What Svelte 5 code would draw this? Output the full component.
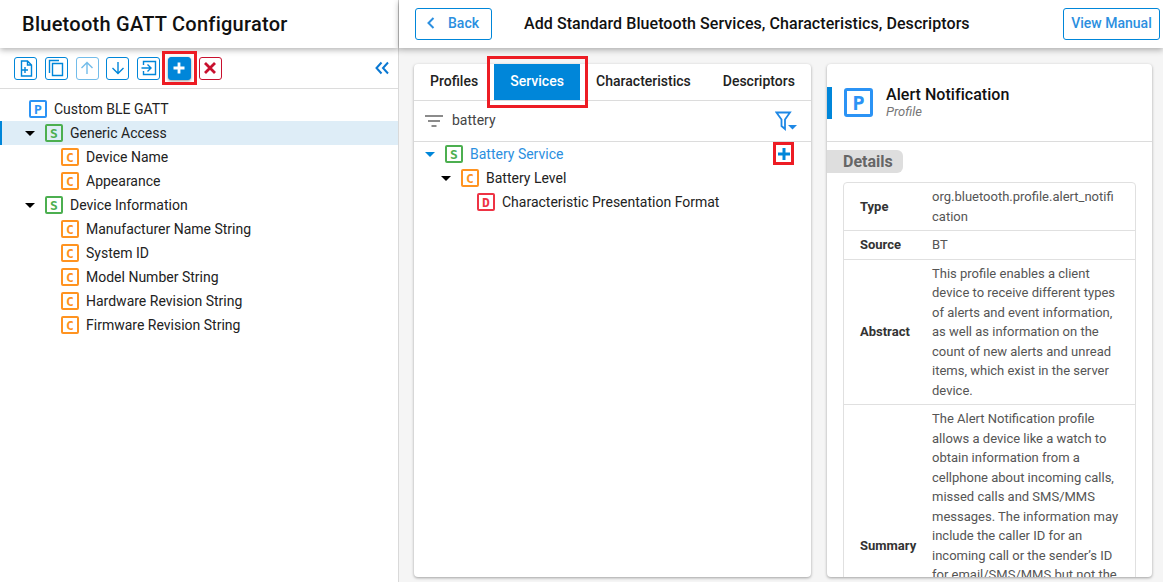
<script>
  const gattTree = [
    { type: 'P', label: 'Custom BLE GATT', depth: 0 },
    { type: 'S', label: 'Generic Access', depth: 0, open: true, selected: true },
    { type: 'C', label: 'Device Name', depth: 1 },
    { type: 'C', label: 'Appearance', depth: 1 },
    { type: 'S', label: 'Device Information', depth: 0, open: true },
    { type: 'C', label: 'Manufacturer Name String', depth: 1 },
    { type: 'C', label: 'System ID', depth: 1 },
    { type: 'C', label: 'Model Number String', depth: 1 },
    { type: 'C', label: 'Hardware Revision String', depth: 1 },
    { type: 'C', label: 'Firmware Revision String', depth: 1 }
  ];

  const tabs = ['Profiles', 'Services', 'Characteristics', 'Descriptors'];

  const details = [
    { key: 'Type', value: 'org.bluetooth.profile.alert_notification' },
    { key: 'Source', value: 'BT' },
    { key: 'Abstract', value: 'This profile enables a client device to receive different types of alerts and event information, as well as information on the count of new alerts and unread items, which exist in the server device.' },
    { key: 'Summary', value: 'The Alert Notification profile allows a device like a watch to obtain information from a cellphone about incoming calls, missed calls and SMS/MMS messages. The information may include the caller ID for an incoming call or the sender\u2019s ID for email/SMS/MMS but not the message content. This profile also enables the client device to get information on how many new alerts and unread items exist in the server device.' }
  ];
</script>

{#snippet badge(type)}
  <span class="badge badge-{type}">{type}</span>
{/snippet}

<div class="app">
  <aside class="sidebar">
    <header class="side-head"><h1>Bluetooth GATT Configurator</h1></header>

    <div class="toolbar">
      <button class="tool" aria-label="New">
        <svg viewBox="0 0 18 18"><path d="M4.500 2h6l4 4v11h-10zM10.500 2v4h4M8 8v6M5 11h6"/></svg>
      </button>
      <button class="tool" aria-label="Copy">
        <svg viewBox="0 0 18 18"><path d="M5.500 4.500h10v12h-10zM2.500 14V1.500H12"/></svg>
      </button>
      <button class="tool disabled" aria-label="Move up">
        <svg viewBox="0 0 18 18"><path d="M9 15V3.500M3.500 9L9 3.500 14.500 9"/></svg>
      </button>
      <button class="tool" aria-label="Move down">
        <svg viewBox="0 0 18 18"><path d="M9 3v11.500M3.500 9L9 14.500 14.500 9"/></svg>
      </button>
      <button class="tool" aria-label="Import">
        <svg viewBox="0 0 18 18"><path d="M3.500 6V2.500h12v13h-12V12M1.500 9h9M7.500 5.500L11 9l-3.500 3.500"/></svg>
      </button>
      <button class="tool add" aria-label="Add">
        <svg viewBox="0 0 16 16"><path d="M8 2.500v11M2.500 8h11"/></svg>
      </button>
      <button class="tool remove" aria-label="Delete">
        <svg viewBox="0 0 16 16"><path d="M3 3l10 10M13 3L3 13"/></svg>
      </button>
      <button class="collapse" aria-label="Collapse">
        <svg viewBox="0 0 14 14"><path d="M6.500 1.500L1.500 7l5 5.500M13 1.500L8 7l5 5.500"/></svg>
      </button>
    </div>

    <ul class="tree side-tree">
      {#each gattTree as node}
        <li class="row" class:selected={node.selected} style="padding-left: {29 + node.depth * 32}px">
          {#if node.open}<span class="caret"></span>{/if}
          {@render badge(node.type)}
          <span class="label">{node.label}</span>
        </li>
      {/each}
    </ul>
  </aside>

  <div class="main">
    <header class="main-head">
      <button class="outline back">
        <svg viewBox="0 0 10 14"><path d="M7.500 2L2.500 7l5 5"/></svg>
        Back
      </button>
      <h2>Add Standard Bluetooth Services, Characteristics, Descriptors</h2>
      <button class="outline manual">View Manual</button>
    </header>

    <div class="content">
      <section class="card picker">
        <nav class="tabs">
          {#each tabs as tab}
            <button class="tab" class:active={tab === 'Services'}>{tab}</button>
          {/each}
        </nav>

        <div class="filter">
          <svg class="sort" viewBox="0 0 18 12"><path d="M0 1h18M3 6h12M6.500 11h5"/></svg>
          <span class="query">battery</span>
          <svg class="funnel" viewBox="0 0 22 20">
            <path d="M1.500 1.500h13.500l-5 7v9.500l-3.500-3v-6.500z"/>
            <path class="fill" d="M13 14h9l-4.500 4.500z"/>
          </svg>
        </div>

        <ul class="tree result-tree">
          <li class="row hit">
            <span class="caret blue"></span>
            {@render badge('S')}
            <span class="label">Battery Service</span>
            <svg class="plus" viewBox="0 0 14 14"><path d="M7 1v12M1 7h12"/></svg>
          </li>
          <li class="row sub">
            <span class="caret"></span>
            {@render badge('C')}
            <span class="label">Battery Level</span>
          </li>
          <li class="row leaf">
            {@render badge('D')}
            <span class="label">Characteristic Presentation Format</span>
          </li>
        </ul>

        <span class="mark mark-tab"></span>
        <span class="mark mark-plus"></span>
      </section>

      <section class="card info">
        <div class="info-head">
          <span class="big-badge">P</span>
          <div>
            <div class="info-title">Alert Notification</div>
            <div class="info-sub">Profile</div>
          </div>
        </div>
        <div class="chip">Details</div>
        <table>
          <tbody>
            {#each details as d}
              <tr>
                <th>{d.key}</th>
                <td>{d.value}</td>
              </tr>
            {/each}
          </tbody>
        </table>
      </section>
    </div>
  </div>

  <span class="mark mark-add"></span>
</div>

<style>
  :global(body) {
    margin: 0;
    font-family: Roboto, "Liberation Sans", sans-serif;
    color: #1a1a1a;
  }
  button {
    font-family: inherit;
    background: none;
    padding: 0;
    cursor: pointer;
  }
  ul {
    list-style: none;
    margin: 0;
    padding: 0;
  }
  .app {
    position: relative;
    display: flex;
    width: 1163px;
    height: 582px;
    overflow: hidden;
    background: #fff;
  }

  /* sidebar */
  .sidebar {
    width: 398px;
    flex-shrink: 0;
    border-right: 1px solid #d9d9d9;
    background: #fff;
  }
  .side-head {
    position: relative;
    height: 48px;
    display: flex;
    align-items: center;
    padding-left: 22px;
    box-shadow: 0 2px 6px rgba(0, 0, 0, 0.3);
  }
  h1 {
    margin: 0;
    font-size: 20px;
    font-weight: 500;
    letter-spacing: 0.26px;
    color: #111;
  }
  .toolbar {
    display: flex;
    align-items: center;
    gap: 7.800px;
    height: 40px;
    padding-left: 14px;
    padding-right: 9px;
    border-bottom: 1px solid #dcdcdc;
  }
  .tool {
    width: 23px;
    height: 23px;
    box-sizing: border-box;
    border: 1px solid #0086d9;
    border-radius: 3px;
    display: flex;
    align-items: center;
    justify-content: center;
    color: #0086d9;
  }
  .tool svg {
    width: 18px;
    height: 18px;
    fill: none;
    stroke: currentColor;
    stroke-width: 1.400;
  }
  .tool.disabled {
    opacity: 0.55;
  }
  .tool.add {
    background: #0086d9;
    color: #fff;
    box-shadow: 0 1px 3px rgba(0, 0, 0, 0.4);
  }
  .tool.add svg,
  .tool.remove svg {
    width: 16px;
    height: 16px;
    stroke-width: 2.800;
  }
  .tool.remove {
    border-color: #c8102e;
    color: #c8102e;
  }
  .collapse {
    margin-left: auto;
    border: 0;
    width: 14px;
    height: 14px;
    color: #0a78d2;
  }
  .collapse svg {
    display: block;
    fill: none;
    stroke: currentColor;
    stroke-width: 2;
  }

  /* trees */
  .side-tree {
    padding-top: 8px;
  }
  .row {
    position: relative;
    display: flex;
    align-items: center;
    height: 24px;
    font-size: 14px;
    color: #222;
    box-sizing: border-box;
  }
  .row.selected {
    background: #deedf7;
    box-shadow: inset 2px 0 0 #0086d9;
  }
  .caret {
    position: absolute;
    width: 0;
    height: 0;
    margin-left: -5px;
    margin-top: 1px;
    border-left: 5px solid transparent;
    border-right: 5px solid transparent;
    border-top: 5px solid #000;
  }
  .side-tree .row:has(.caret) {
    padding-left: 45px !important;
  }
  .side-tree .caret {
    left: 30px;
  }
  .caret.blue {
    border-top-color: #0086d9;
  }
  .badge {
    width: 18px;
    height: 18px;
    box-sizing: border-box;
    border: 2.500px solid;
    border-radius: 2px;
    display: inline-flex;
    align-items: center;
    justify-content: center;
    font-family: "DejaVu Sans Mono", monospace;
    font-size: 13px;
    font-weight: 700;
    margin-right: 7px;
    flex-shrink: 0;
  }
  .badge-P { color: #2b93f5; }
  .badge-S { color: #4caf50; }
  .badge-C { color: #ff9320; }
  .badge-D { color: #ee3344; }

  /* main */
  .main {
    flex: 1;
    min-width: 0;
    display: flex;
    flex-direction: column;
    background: #f5f5f5;
  }
  .main-head {
    position: relative;
    z-index: 1;
    height: 48px;
    flex-shrink: 0;
    display: flex;
    align-items: center;
    background: #fff;
    box-shadow: 0 2px 6px rgba(0, 0, 0, 0.3);
    padding-left: 16px;
    padding-right: 3px;
  }
  h2 {
    margin: -2px 0 0 32px;
    font-size: 16px;
    font-weight: 500;
    letter-spacing: 0.07px;
    color: #111;
    flex: 1;
    white-space: nowrap;
  }
  .outline {
    height: 32px;
    box-sizing: border-box;
    border: 1px solid #0086d9;
    border-radius: 3px;
    color: #2b8fe0;
    font-size: 14px;
    font-weight: 500;
    padding-bottom: 2px;
  }
  .back {
    width: 77px;
    display: flex;
    align-items: center;
    padding-left: 10px;
    gap: 12px;
  }
  .back svg {
    width: 10px;
    height: 14px;
    fill: none;
    stroke: currentColor;
    stroke-width: 2;
  }
  .manual {
    width: 97px;
  }
  .content {
    flex: 1;
    display: flex;
    gap: 16px;
    padding: 16px 11px 5px 15px;
    min-height: 0;
  }
  .card {
    position: relative;
    background: #fff;
    border-radius: 4px;
    box-shadow: 0 1px 3px rgba(0, 0, 0, 0.35);
  }
  .picker {
    width: 397px;
  }
  .tabs {
    display: flex;
    height: 36px;
    border-bottom: 1px solid #dcdcdc;
  }
  .tab {
    border: 0;
    font-size: 14px;
    font-weight: 500;
    color: #222;
    height: 36px;
    padding: 0 16px 2px;
    white-space: nowrap;
  }
  .tab.active {
    background: #0086d9;
    color: #fff;
    width: 86px;
    padding: 0 0 2px;
  }
  .filter {
    position: relative;
    display: flex;
    align-items: center;
    height: 40px;
    padding-left: 11px;
    border-bottom: 1px solid #dcdcdc;
  }
  .sort {
    width: 18px;
    height: 12px;
    fill: none;
    stroke: #666;
    stroke-width: 1.600;
    margin-right: 9px;
  }
  .query {
    font-size: 14px;
    color: #444;
    margin-top: -3px;
  }
  .funnel {
    position: absolute;
    right: 14px;
    top: 10px;
    width: 22px;
    height: 20px;
    fill: none;
    stroke: #1e88e5;
    stroke-width: 1.800;
  }
  .funnel .fill {
    fill: #1e88e5;
    stroke: none;
  }
  .result-tree .row {
    padding-left: 31px;
  }
  .result-tree .caret {
    left: 16px;
  }
  .result-tree .sub {
    padding-left: 47px;
  }
  .result-tree .sub .caret {
    left: 32px;
  }
  .result-tree .leaf {
    padding-left: 63px;
  }
  .hit .label {
    color: #2b8fe0;
  }
  .plus {
    position: absolute;
    left: 363px;
    top: 5px;
    width: 14px;
    height: 14px;
    fill: none;
    stroke: #0086d9;
    stroke-width: 3;
  }

  /* red callouts */
  .mark {
    position: absolute;
    box-sizing: border-box;
    border: 3px solid #ed1c24;
    pointer-events: none;
  }
  .mark-add {
    left: 162px;
    top: 51px;
    width: 35px;
    height: 34px;
  }
  .mark-tab {
    left: 73px;
    top: -8px;
    width: 101px;
    height: 52px;
  }
  .mark-plus {
    left: 359px;
    top: 78px;
    width: 21px;
    height: 23px;
  }

  /* details */
  .info {
    width: 325px;
    overflow: hidden;
  }
  .info-head {
    position: relative;
    display: flex;
    align-items: center;
    height: 78px;
    box-sizing: border-box;
    padding-left: 17px;
    border-bottom: 1px solid #dcdcdc;
    gap: 13px;
  }
  .info-head::before {
    content: '';
    position: absolute;
    left: 0;
    top: 23px;
    width: 5px;
    height: 32px;
    background: #0086d9;
  }
  .big-badge {
    width: 29px;
    height: 29px;
    box-sizing: border-box;
    border: 3px solid #2b93f5;
    border-radius: 3px;
    color: #2b93f5;
    display: flex;
    align-items: center;
    justify-content: center;
    font-family: "DejaVu Sans Mono", monospace;
    font-size: 20px;
    font-weight: 700;
  }
  .info-title {
    font-size: 16px;
    font-weight: 500;
    letter-spacing: 0.05px;
    color: #111;
    line-height: 18px;
  }
  .info-sub {
    font-size: 13px;
    font-style: italic;
    color: #777;
    line-height: 16px;
  }
  .chip {
    width: 76px;
    height: 23px;
    box-sizing: border-box;
    margin-top: 8px;
    padding-left: 16px;
    line-height: 23px;
    background: #dedede;
    border-radius: 0 6px 6px 0;
    font-size: 16px;
    font-weight: 700;
    color: #666;
  }
  table {
    margin: 9px 0 0 16px;
    width: 293px;
    border-collapse: separate;
    border-spacing: 0;
    border: 1px solid #e0e0e0;
    border-radius: 4px;
    font-size: 13px;
    line-height: 19.5px;
    table-layout: fixed;
  }
  th {
    width: 56px;
    padding: 0 0 0 16px;
    text-align: left;
    font-weight: 700;
    font-size: 13px;
    color: #333;
    vertical-align: middle;
  }
  td {
    padding: 4px 16px;
    color: #555;
    overflow-wrap: anywhere;
  }
  tr + tr th,
  tr + tr td {
    border-top: 1px solid #e0e0e0;
  }
</style>
